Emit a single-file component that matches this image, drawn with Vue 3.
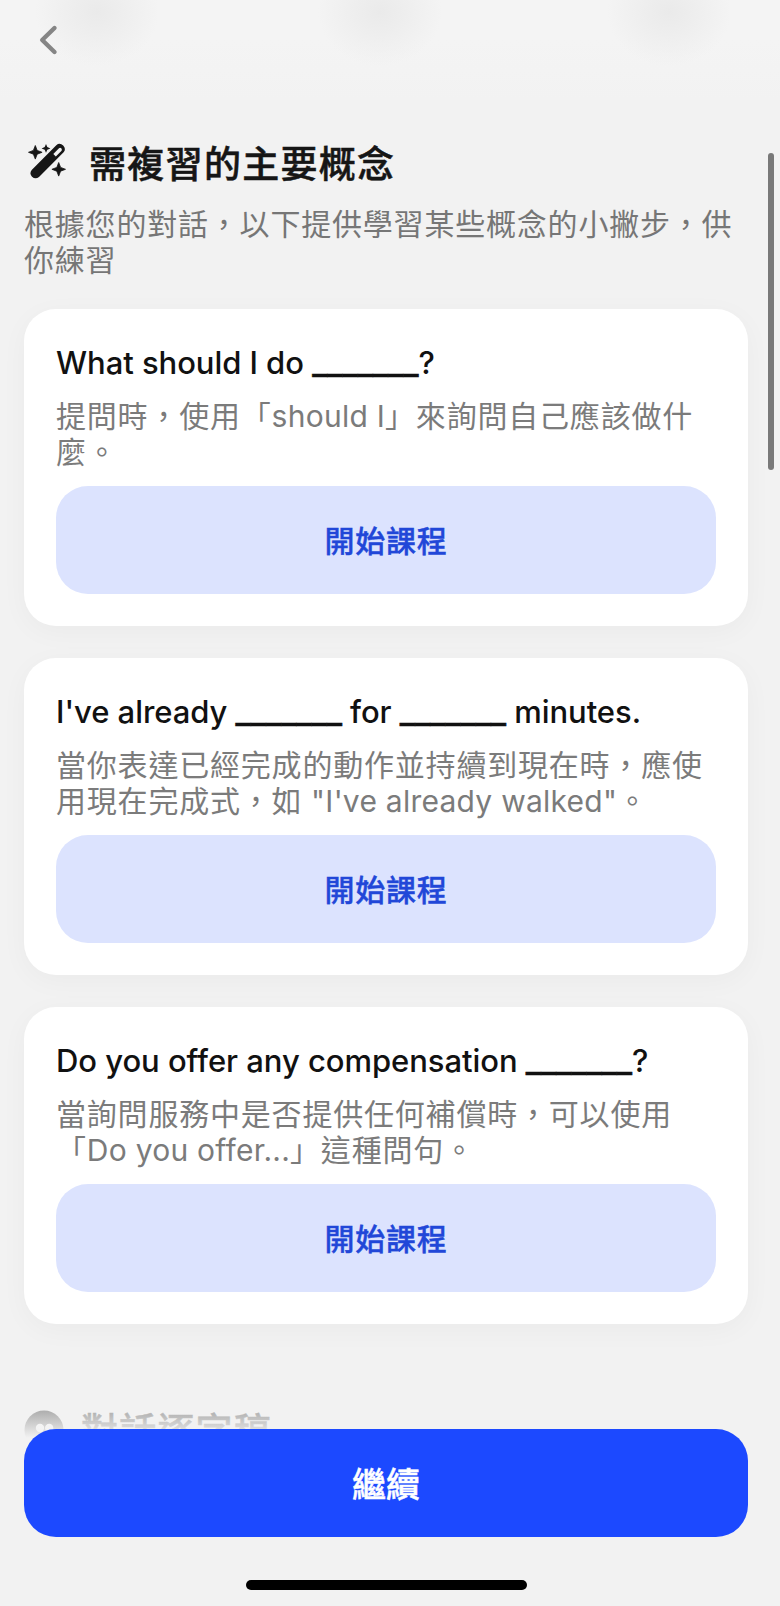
<template>
  <div class="screen">
    <!-- Header -->
    <header class="top-bar">
      <button class="back-btn" aria-label="返回">
        <svg width="20" height="32" viewBox="0 0 20 32" fill="none">
          <path d="M16.500 4L4.200 16L16.500 28" stroke="#858585" stroke-width="4.400" stroke-linecap="round" stroke-linejoin="round" />
        </svg>
      </button>
    </header>

    <!-- Concepts -->
    <main class="content">
      <div class="section-head">
        <svg class="wand" width="38" height="38" viewBox="0 0 38 38" fill="#161616">
          <path fill-rule="evenodd" d="M2.7 27L27.3 2.2Q30.6 -0.6 34.2 2.4Q37.4 5.800 34.6 9.300L10 34Q6.300 36.600 3 33.700Q0 30.500 2.700 27ZM24.300 11.100L26.800 13.500L32.600 7.700Q33.300 6.500 32.300 5.300Q31.100 4.400 30 5.200Z" />
          <path d="M6.300 2.500L8.200 7.400L13.100 9.300L8.200 11.200L6.300 16.100L4.400 11.200L-0.500 9.300L4.400 7.400Z" stroke="#161616" stroke-width="0.800" stroke-linejoin="round" />
          <path d="M17 1L18.300 4.100L21.400 5.400L18.300 6.700L17 9.800L15.700 6.700L12.600 5.400L15.700 4.100Z" />
          <path d="M29.700 19.500L31.600 24.400L36.500 26.300L31.600 28.200L29.700 33.100L27.800 28.200L22.900 26.300L27.800 24.400Z" stroke="#161616" stroke-width="0.800" stroke-linejoin="round" />
        </svg>
        <h1>需複習的主要概念</h1>
      </div>
      <p class="intro">根據您的對話，以下提供學習某些概念的小撇步，供<br />你練習</p>

      <div class="card-list">
        <article class="card" v-for="item in concepts" :key="item.title">
          <h2>
            <span v-for="(part, i) in splitTitle(item.title)" :key="i" :class="{ blank: part[0] === '_' }">{{ part }}</span>
          </h2>
          <p class="desc">
            <span class="line" v-for="(line, i) in item.lines" :key="i">
              <span v-for="(part, j) in line" :key="j" :class="{ latin: j === 1 }">{{ part }}</span>
            </span>
          </p>
          <button class="lesson-btn">開始課程</button>
        </article>
      </div>

      <div class="transcript-head">
        <svg width="40" height="40" viewBox="0 0 40 40">
          <circle cx="20" cy="20" r="19.500" fill="#161616" />
          <circle cx="16" cy="18" r="4.200" fill="#fff" />
          <circle cx="25.200" cy="18" r="4.200" fill="#fff" />
        </svg>
        <h2>對話逐字稿</h2>
      </div>
    </main>

    <div class="scrollbar"></div>

    <!-- Footer -->
    <footer class="bottom-bar">
      <button class="continue-btn">繼續</button>
      <div class="home-indicator"></div>
    </footer>
  </div>
</template>

<script setup>
import { ref } from 'vue'

// 每行依序為：中文、英文、中文
const concepts = ref([
  {
    title: 'What should I do _______?',
    lines: [['提問時，使用「', 'should I', '」來詢問自己應該做什'], ['麼。']],
  },
  {
    title: "I've already _______ for _______ minutes.",
    lines: [['當你表達已經完成的動作並持續到現在時，應使'], ['用現在完成式，如', ' "I\'ve already walked"', '。']],
  },
  {
    title: 'Do you offer any compensation _______?',
    lines: [['當詢問服務中是否提供任何補償時，可以使用'], ['「', 'Do you offer...', '」這種問句。']],
  },
])

const splitTitle = (title) => title.split(/(_+)/)
</script>

<style>
body {
  margin: 0;
  background: #f2f2f2;
}
</style>

<style scoped>
.screen {
  position: relative;
  width: 780px;
  height: 1606px;
  overflow: hidden;
  background: #f2f2f2;
  font-family: Inter, 'Noto Sans CJK TC', sans-serif;
}

h1, h2, p {
  margin: 0;
  white-space: nowrap;
}

button {
  border: none;
  padding: 0;
  font-family: inherit;
  cursor: pointer;
}

.top-bar {
  height: 100px;
  box-sizing: border-box;
  padding: 24px 0 0 38px;
  background: radial-gradient(ellipse 62px 54px at 97px 12px, #eaeaea, rgba(236, 236, 236, 0.7) 45%, rgba(243, 243, 243, 0)),
              radial-gradient(ellipse 62px 54px at 380px 12px, #eaeaea, rgba(236, 236, 236, 0.7) 45%, rgba(243, 243, 243, 0)),
              radial-gradient(ellipse 62px 54px at 669px 12px, #eaeaea, rgba(236, 236, 236, 0.7) 45%, rgba(243, 243, 243, 0)),
              linear-gradient(#f4f4f4, #f4f4f4 40%, #f2f2f2);
}

.back-btn {
  display: block;
  background: none;
}

.back-btn svg {
  display: block;
}

.content {
  padding: 40px 32px 0 24px;
}

.section-head {
  display: flex;
  align-items: center;
  height: 50px;
  padding-left: 5px;
}

.wand {
  overflow: visible;
  margin-bottom: 6px;
}

.section-head h1 {
  margin-left: 22px;
  font-size: 37px;
  font-weight: 500;
  letter-spacing: 1.3px;
  line-height: 50px;
  color: #161616;
  -webkit-text-stroke: 0.5px #161616;
}

.intro {
  margin-top: 16px;
  font-size: 30px;
  letter-spacing: 0.8px;
  line-height: 36px;
  color: #767676;
}

.card-list {
  display: flex;
  flex-direction: column;
  gap: 32px;
  margin-top: 31px;
}

.card {
  box-sizing: border-box;
  height: 317px;
  padding: 33px 32px 32px;
  border-radius: 32px;
  background: #fff;
  box-shadow: 0 6px 28px rgba(0, 0, 0, 0.035);
}

.card h2 {
  height: 40px;
  font-size: 31px;
  font-weight: 500;
  letter-spacing: -0.05px;
  line-height: 40px;
  color: #111;
}

.blank {
  font-size: 33px;
  letter-spacing: -0.1px;
  -webkit-text-stroke: 0.6px #111;
}

.desc {
  margin-top: 16px;
  margin-bottom: 16px;
  font-size: 30px;
  letter-spacing: 0.8px;
  line-height: 36px;
  color: #7b7b7b;
}

.line {
  display: block;
  height: 36px;
  white-space: pre;
}

.latin {
  letter-spacing: 0.25px;
}

.lesson-btn {
  width: 100%;
  height: 108px;
  padding-bottom: 2px;
  border-radius: 32px;
  background: #dce3fe;
  color: #2147d8;
  font-size: 30px;
  font-weight: 500;
  letter-spacing: 0.8px;
  -webkit-text-stroke: 0.4px #2147d8;
}

.transcript-head {
  display: flex;
  align-items: center;
  gap: 17px;
  height: 50px;
  margin-top: 81px;
}

.transcript-head h2 {
  padding-top: 3px;
  font-size: 37px;
  font-weight: 500;
  letter-spacing: 1.2px;
  line-height: 50px;
  color: #161616;
  -webkit-text-stroke: 0.5px #161616;
}

.scrollbar {
  position: absolute;
  top: 153px;
  right: 6px;
  width: 6px;
  height: 317px;
  border-radius: 3px;
  background: #797979;
}

.bottom-bar {
  position: absolute;
  left: 0;
  right: 0;
  bottom: 0;
  height: 256px;
  box-sizing: border-box;
  padding: 79px 32px 0 24px;
  background: linear-gradient(rgba(242, 242, 242, 0), #f2f2f2 88px);
}

.continue-btn {
  display: block;
  width: 100%;
  height: 108px;
  padding-bottom: 2px;
  border-radius: 32px;
  background: #1c49ff;
  color: #fff;
  font-size: 34px;
  font-weight: 500;
  -webkit-text-stroke: 0.5px #fff;
}

.home-indicator {
  width: 281px;
  height: 10px;
  margin: 43px 0 0 222px;
  border-radius: 5px;
  background: #000;
}
</style>
